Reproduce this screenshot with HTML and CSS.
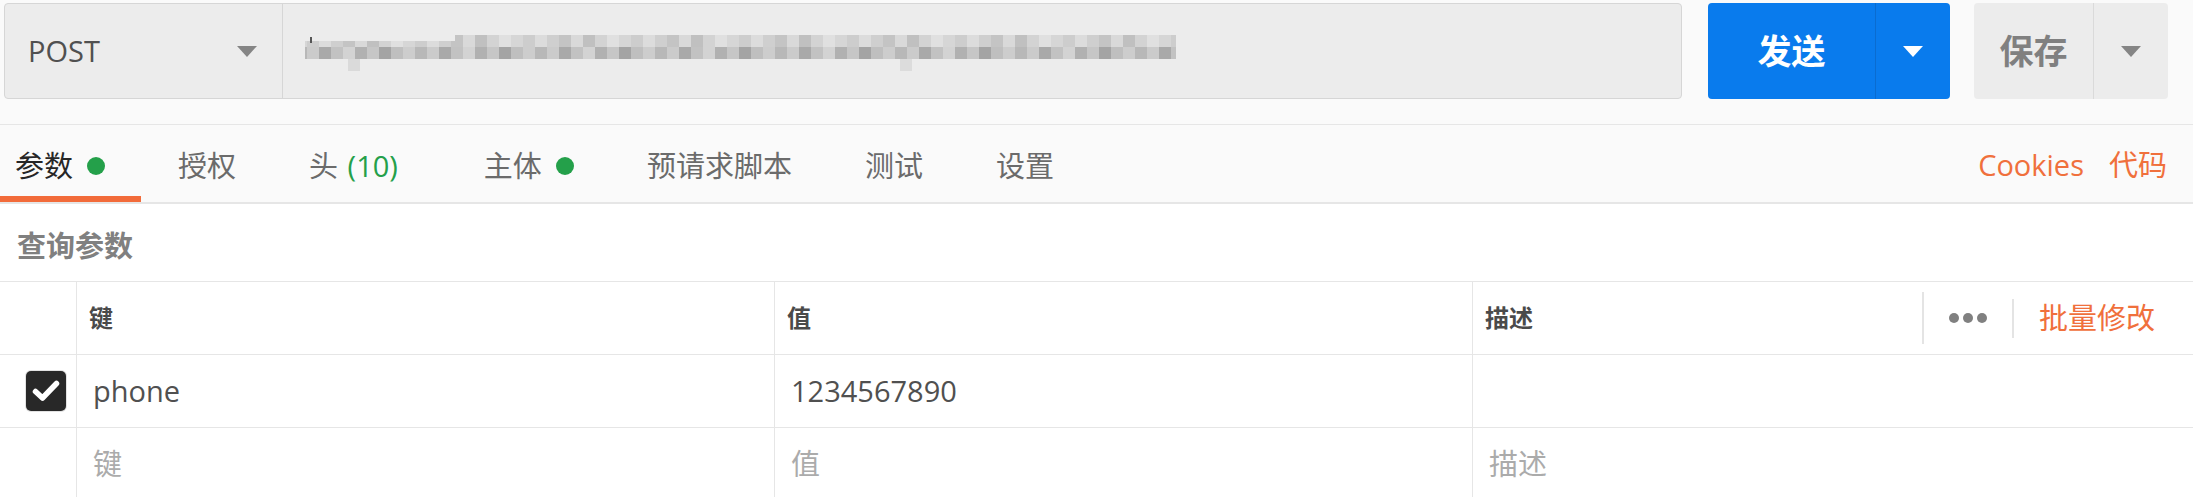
FILE: index.html
```html
<!DOCTYPE html>
<html lang="zh">
<head>
<meta charset="utf-8">
<title>Request</title>
<link rel="stylesheet" href="styles.css">
</head>
<body>
<div class="app">
  <header class="topbar">
    <div class="urlbox">
      <div class="method">
        <span class="method-label">POST</span>
        <span class="caret caret-gray"></span>
      </div>
      <div class="url">
        <div class="blur" aria-label="blurred url"></div>
      </div>
    </div>
    <div class="btn btn-send">
      <span class="btn-main">发送</span>
      <span class="btn-drop"><span class="caret caret-white"></span></span>
    </div>
    <div class="btn btn-save">
      <span class="btn-main">保存</span>
      <span class="btn-drop"><span class="caret caret-gray"></span></span>
    </div>
  </header>

  <nav class="tabs">
    <div class="tab tab-active">参数<span class="dot"></span></div>
    <div class="tab">授权</div>
    <div class="tab tab-wide">头 <span class="count">(10)</span></div>
    <div class="tab">主体<span class="dot"></span></div>
    <div class="tab">预请求脚本</div>
    <div class="tab">测试</div>
    <div class="tab">设置</div>
    <div class="tabs-right">
      <span class="link">Cookies</span>
      <span class="link">代码</span>
    </div>
  </nav>

  <section class="params">
    <div class="section-title">查询参数</div>
    <div class="table">
      <div class="cell cell-check head"></div>
      <div class="cell head"><span class="head-label">键</span></div>
      <div class="cell head"><span class="head-label">值</span></div>
      <div class="cell head head-desc">
        <span class="head-label">描述</span>
        <div class="head-tools">
          <span class="vdiv vdiv-tall"></span>
          <span class="dots"><i></i><i></i><i></i></span>
          <span class="vdiv vdiv-short"></span>
          <span class="bulk">批量修改</span>
        </div>
      </div>

      <div class="cell cell-check">
        <span class="checkbox">
          <svg viewBox="0 0 40 40" width="40" height="40"><polyline points="9.5,20.5 16.5,27 30.5,12.5" fill="none" stroke="#fff" stroke-width="5.5" stroke-linecap="round" stroke-linejoin="round"/></svg>
        </span>
      </div>
      <div class="cell"><span class="val">phone</span></div>
      <div class="cell"><span class="val">1234567890</span></div>
      <div class="cell"></div>

      <div class="cell cell-check"></div>
      <div class="cell"><span class="ph">键</span></div>
      <div class="cell"><span class="ph">值</span></div>
      <div class="cell"><span class="ph">描述</span></div>
    </div>
  </section>
</div>
</body>
</html>
```

FILE: styles.css
```css
* { box-sizing: border-box; }

html, body {
  margin: 0;
  padding: 0;
  background: #ffffff;
  overflow: hidden;
}

body {
  font-family: "Open Sans", "Noto Sans CJK SC", sans-serif;
  font-size: 29px;
  color: #505050;
  width: 2193px;
  height: 497px;
}

.app {
  display: flex;
  flex-direction: column;
}

/* ---------- top bar ---------- */
.topbar {
  display: flex;
  align-items: stretch;
  height: 125px;
  padding: 3px 25px 25px 4px;
  background: #fafafa;
  border-bottom: 1px solid #e6e6e6;
}

.urlbox {
  flex: 1;
  display: flex;
  margin-right: 26px;
  background: #ececec;
  border: 1px solid #d6d6d6;
  border-radius: 4px;
}

.method {
  width: 278px;
  display: flex;
  align-items: center;
  justify-content: space-between;
  padding: 0 25px 0 23px;
  border-right: 1px solid #d6d6d6;
}

.method-label {
  font-size: 29px;
  line-height: 40px;
  color: #505050;
}

.caret {
  width: 0;
  height: 0;
  border-left: 10px solid transparent;
  border-right: 10px solid transparent;
  border-top: 11px solid #808080;
}
.caret-white { border-top-color: #ffffff; border-left-width: 10.5px; border-right-width: 10.5px; }
.caret-gray { border-top-color: #858585; }

.url {
  flex: 1;
  display: flex;
  align-items: center;
  padding-left: 12px;
}

.blur {
  width: 881px;
  height: 36px;
  margin-top: 3px;
  background:
    linear-gradient(#dadada, #dadada) 53px 24px / 12px 12px no-repeat,
    linear-gradient(#dcdcdc, #dcdcdc) 605px 24px / 12px 12px no-repeat,
    linear-gradient(#555555, #555555) 15px 2px / 2px 6px no-repeat,
    linear-gradient(#ececec, #ececec) 0 0 / 160px 6px no-repeat,
    linear-gradient(#ececec, #ececec) 0 0 / 10px 36px no-repeat,
    repeating-linear-gradient(90deg, #d6d6d6 0 12px, #cdcdcd 12px 24px, #dcdcdc 24px 36px, #cfcfcf 36px 48px, #c4c4c4 48px 60px, #d9d9d9 60px 72px, #c0c0c0 72px 84px, #d3d3d3 84px 96px, #e0e0e0 96px 108px) 0 0 / 100% 12px no-repeat,
    repeating-linear-gradient(90deg, #b8b8b8 0 12px, #cbcbcb 12px 24px, #a9a9a9 24px 36px, #c2c2c2 36px 48px, #d3d3d3 48px 60px, #b1b1b1 60px 72px, #c6c6c6 72px 84px, #a4a4a4 84px 96px, #bfbfbf 96px 108px, #cdcdcd 108px 120px) 0 12px / 100% 12px no-repeat;
}

.btn {
  display: flex;
  flex-shrink: 0;
  border-radius: 4px;
  font-size: 34px;
  font-weight: 700;
  line-height: 40px;
}

.btn-main {
  display: flex;
  align-items: center;
  justify-content: center;
}

.btn-drop {
  width: 74px;
  display: flex;
  align-items: center;
  justify-content: center;
}

.btn-send {
  width: 242px;
  margin-right: 24px;
  background: #097bed;
  color: #ffffff;
}
.btn-send .btn-main { width: 168px; border-right: 1px solid #0a6cd0; }

.btn-save {
  width: 194px;
  background: #ececec;
  color: #808080;
}
.btn-save .btn-main { width: 120px; border-right: 1px solid #dadada; }

/* ---------- tabs ---------- */
.tabs {
  display: flex;
  align-items: stretch;
  height: 79px;
  background: #fafafa;
  border-bottom: 2px solid #e6e6e6;
}

.tab {
  display: flex;
  align-items: center;
  padding: 4px 36px 0 15px;
  margin-right: 22px;
  font-size: 29px;
  line-height: 40px;
  color: #6b6b6b;
  white-space: pre;
}

.tab-active {
  color: #262626;
  box-shadow: inset 0 -6px 0 #f26b3a;
}

.tab-wide { padding-right: 49px; }

.dot {
  width: 18px;
  height: 18px;
  border-radius: 50%;
  background: #24a04a;
  margin-left: 14px;
}

.count { color: #24a04a; margin-left: 2px; }

.tabs-right {
  margin-left: auto;
  display: flex;
  align-items: center;
  gap: 25px;
  padding: 2px 26px 0 0;
}

.link {
  color: #f0703c;
  font-size: 29px;
  line-height: 40px;
}

/* ---------- params ---------- */
.section-title {
  height: 78px;
  display: flex;
  align-items: center;
  padding: 2px 0 0 17px;
  font-size: 29px;
  font-weight: 700;
  color: #808080;
  border-bottom: 1px solid #e6e6e6;
}

.table {
  display: grid;
  grid-template-columns: 76px 698px 698px 1fr;
  grid-template-rows: 73px 73px 73px;
}

.cell {
  display: flex;
  align-items: center;
  padding-left: 16px;
  border-left: 1px solid #e6e6e6;
  border-bottom: 1px solid #e6e6e6;
}

.cell-check {
  border-left: none;
  padding-left: 26px;
}

.head { padding-left: 12px; }

.head-label {
  font-size: 24px;
  font-weight: 700;
  color: #4a4a4a;
  line-height: 32px;
}

.head-desc { padding-right: 38px; }

.head-tools {
  margin-left: auto;
  display: flex;
  align-items: center;
  gap: 25px;
}

.vdiv {
  width: 2px;
  background: #e4e4e4;
}
.vdiv-tall { height: 52px; }
.vdiv-short { height: 39px; }

.dots {
  display: flex;
  gap: 4px;
}
.dots i {
  width: 10px;
  height: 10px;
  border-radius: 50%;
  background: #808080;
}

.bulk {
  color: #f0703c;
  font-size: 29px;
  line-height: 40px;
}

.checkbox {
  width: 40px;
  height: 40px;
  border-radius: 5px;
  background: #282828;
  box-shadow: 0 0 0 1px #e2e2e2;
  display: flex;
}

.val {
  font-size: 29px;
  line-height: 40px;
  color: #505050;
}

.ph {
  font-size: 29px;
  line-height: 40px;
  color: #ababab;
}
```
